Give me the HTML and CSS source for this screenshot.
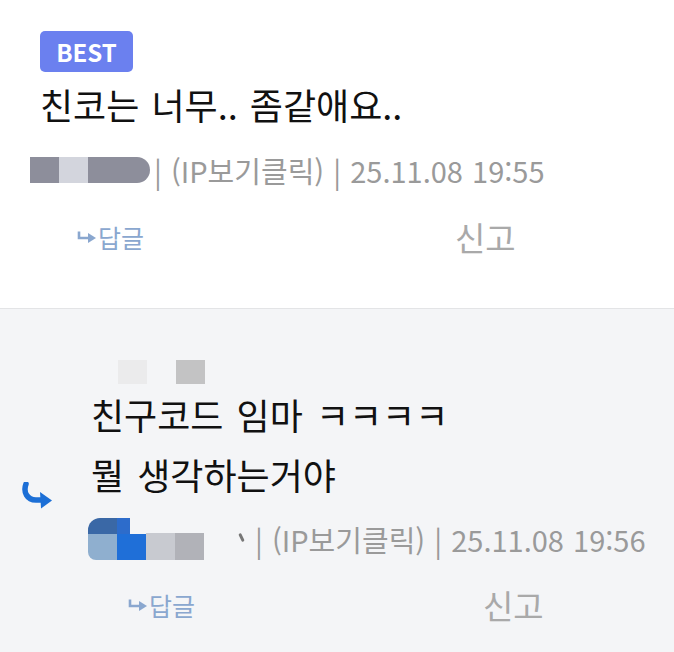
FILE: index.html
```html
<!DOCTYPE html>
<html lang="ko">
<head>
<meta charset="utf-8">
<link rel="stylesheet" href="styles.css">
</head>
<body>
<div class="comment">
  <span class="badge">BEST</span>
  <div class="title">친코는 너무.. 좀같애요..</div>
  <div class="meta">
    <span class="ava1"><i class="b1"></i><i class="b2"></i><i class="b3"></i></span>
    <span class="info">| (IP보기클릭) | 25.11.08 19:55</span>
  </div>
  <div class="actions top-actions">
    <span class="reply-btn"><svg class="mini" viewBox="0 0 20 14" width="20" height="14"><path d="M2 1.5 V8 H13" fill="none" stroke="#8aa7cf" stroke-width="2.6"/><path d="M11 3 L19 8 L11 13 Z" fill="#8aa7cf"/></svg>답글</span>
    <span class="report">신고</span>
  </div>
</div>
<div class="reply">
  <div class="reply-left">
    <svg class="rarrow" viewBox="0 0 32 28" width="32" height="28"><path d="M5 2 C2 10 6 18 15 18 L21 18" fill="none" stroke="#1c6fd6" stroke-width="5.5" stroke-linecap="round"/><path d="M19 10 L31 18.5 L20 26.5 Z" fill="#1c6fd6"/></svg>
  </div>
  <div class="reply-body">
    <div class="squares"><i class="sq1"></i><i class="sq2"></i></div>
    <div class="rtext">친구코드 임마 ㅋㅋㅋㅋ<br>뭘 생각하는거야</div>
    <div class="meta rmeta">
      <span class="ava2"><i class="c1"></i><i class="c2"></i><i class="c0"></i><i class="c0"></i><i class="c3"></i><i class="c4"></i><i class="c5"></i><i class="c6"></i></span>
      <span class="tick"></span>
      <span class="info">| (IP보기클릭) | 25.11.08 19:56</span>
    </div>
    <div class="actions reply-actions">
      <span class="reply-btn"><svg class="mini" viewBox="0 0 20 14" width="20" height="14"><path d="M2 1.5 V8 H13" fill="none" stroke="#8aa7cf" stroke-width="2.6"/><path d="M11 3 L19 8 L11 13 Z" fill="#8aa7cf"/></svg>답글</span>
      <span class="report">신고</span>
    </div>
  </div>
</div>
</body>
</html>
```
FILE: styles.css
```css
html, body {
  margin: 0;
  padding: 0;
}
body {
  width: 674px;
  height: 652px;
  overflow: hidden;
  background: #f4f5f7;
  font-family: "Noto Sans CJK KR", "Noto Sans", sans-serif;
  color: #111;
}
.comment {
  background: #fff;
  padding: 31px 0 49px 40px;
  border-bottom: 1px solid #e3e4e6;
}
.badge {
  display: inline-flex;
  align-items: center;
  justify-content: center;
  width: 93px;
  height: 41px;
  border-radius: 5px;
  background: #6b80ef;
  color: #fff;
  font-weight: 700;
  font-size: 24px;
  line-height: 1;
}
.title {
  margin-top: 8px;
  font-size: 36px;
  line-height: 48px;
  word-spacing: 2px;
}
.meta {
  display: flex;
  align-items: center;
  height: 40px;
  margin-top: 22px;
  margin-left: -10px;
}
.info {
  font-size: 29px;
  line-height: 40px;
  color: #9a9a9a;
  white-space: pre;
  word-spacing: 1px;
}
.ava1 {
  display: flex;
  height: 26px;
  margin-right: 4px;
}
.ava1 i {
  display: block;
  height: 26px;
}
.ava1 .b1 { width: 29px; background: #8d8e9b; }
.ava1 .b2 { width: 29px; background: #d3d5dd; }
.ava1 .b3 { width: 62px; background: #8d8e9b; border-radius: 0 13px 13px 0; }
.actions {
  display: flex;
  align-items: center;
  height: 44px;
}
.top-actions {
  margin-top: 25px;
  padding-left: 37px;
}
.reply-btn {
  display: inline-flex;
  align-items: center;
  font-size: 25px;
  color: #8aa7cf;
  line-height: 44px;
}
.mini {
  margin-right: 1px;
}
.top-actions .reply-btn { width: 378px; }
.report {
  font-size: 33px;
  line-height: 44px;
  color: #a9a9a9;
}
.reply {
  display: flex;
}
.reply-left {
  width: 88px;
  padding-top: 173px;
  padding-left: 21px;
  box-sizing: border-box;
}
.rarrow {
  display: block;
}
.reply-body {
  flex: 1;
  padding-top: 51px;
}
.squares {
  display: flex;
  height: 24px;
  padding-left: 30px;
}
.squares i {
  display: block;
  width: 29px;
  height: 24px;
}
.sq1 { background: #ebebec; margin-right: 29px; }
.sq2 { background: #c3c3c4; }
.rtext {
  font-size: 36px;
  line-height: 60px;
  padding-left: 3px;
  word-spacing: 3px;
}
.rmeta {
  margin-top: 15px;
  margin-left: 0;
}
.ava2 {
  display: grid;
  grid-template-columns: repeat(4, 29px);
  grid-template-rows: 16px 26px;
  margin-right: 36px;
}
.ava2 i { display: block; }
.ava2 .c0 { background: transparent; }
.ava2 .c1 { background: #3a68a6; border-radius: 12px 0 0 0; }
.ava2 .c2 { background: linear-gradient(90deg, #2d6ccb 0 45%, transparent 45%); border-radius: 0 10px 0 0; }
.ava2 .c3 { background: #8fafcf; border-radius: 0 0 0 8px; }
.ava2 .c4 { background: #1f6fd8; }
.ava2 .c5 { background: #c8cad0; margin-top: -1px; }
.ava2 .c6 { background: #b1b2b8; margin-top: -1px; }
.tick {
  display: block;
  width: 3px;
  height: 9px;
  background: #777;
  border-radius: 2px;
  transform: rotate(-25deg);
  margin-right: 12px;
  margin-top: -4px;
}
.reply-actions {
  margin-top: 24px;
  padding-left: 40px;
}
.reply-actions .reply-btn { width: 355px; }
```
